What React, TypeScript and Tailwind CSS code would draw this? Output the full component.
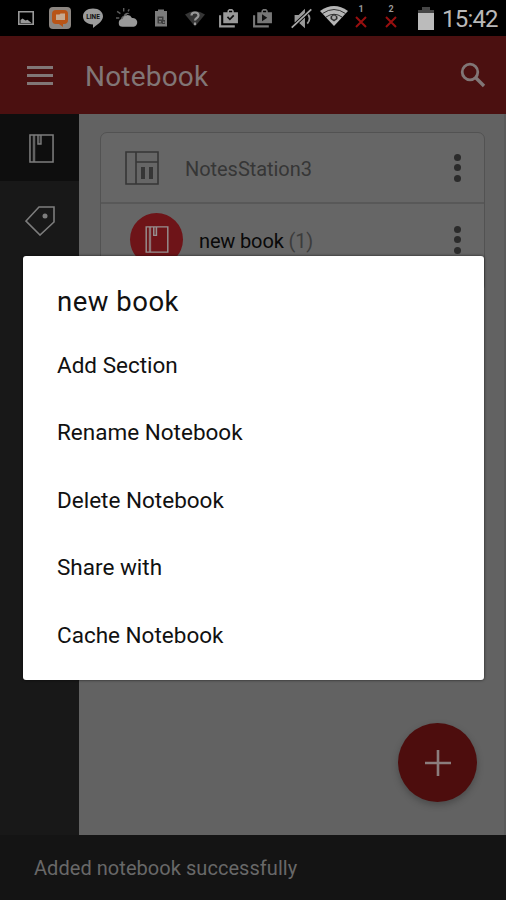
import type { ReactNode } from "react";

const actions = ["Add Section", "Rename Notebook", "Delete Notebook", "Share with", "Cache Notebook"];

function BookIcon({ className }: { className: string }) {
    return (
        <svg viewBox="0 0 26 30" className={className} fill="none" stroke="currentColor" strokeWidth="1.6">
            <path d="M1 1h24v28H1z" />
            <path d="M5.200 1v28" strokeWidth="2.600" opacity=".75" />
            <path d="M9.300 1v9.300h3.200V1" fill="currentColor" fillOpacity=".35" strokeWidth="1.400" />
        </svg>
    );
}

function MoreButton() {
    return (
        <button className="flex w-8 flex-col items-center gap-[3.5px]">
            <span className="size-[7px] rounded-full bg-[#2b2b2b]" />
            <span className="size-[7px] rounded-full bg-[#2b2b2b]" />
            <span className="size-[7px] rounded-full bg-[#2b2b2b]" />
        </button>
    );
}

function StatusIcon({ className, children }: { className: string; children: ReactNode }) {
    return (
        <svg viewBox="0 0 20 20" className={`shrink-0 ${className}`} fill="currentColor">
            {children}
        </svg>
    );
}

function SimSlot({ slot }: { slot: number }) {
    return (
        <div className="flex w-4 flex-col items-center">
            <span className="h-2 text-[9px] leading-2 font-bold">{slot}</span>
            <svg viewBox="0 0 12 12" className="mt-[3px] size-3" stroke="#980f0f" strokeWidth="2">
                <path d="M1 1l10 10M11 1L1 11" />
            </svg>
        </div>
    );
}

function StatusBar() {
    return (
        <div className="flex h-9 items-center bg-black text-[#999]">
            {/* Notifications */}
            <StatusIcon className="ml-4 size-5">
                <path fillRule="evenodd" d="M2 3h16v14H2z M3.600 4.600v10.800h12.800V4.600z" />
                <path d="M4.500 15v-3l2-1.500 3 2 2-.8 4 3.300z" />
            </StatusIcon>
            <svg viewBox="0 0 22 22" className="ml-[13px] size-[22px] shrink-0">
                <rect width="22" height="22" rx="4" fill="#8c8681" />
                <path d="M7 3h8q4 0 4 4v6q0 4-4 4h-1v3l-4-3H7q-4 0-4-4V7q0-4 4-4z" fill="#b85416" />
                <path d="M7 7.500h3.500l1-1H16V13H7z" fill="#c6aa91" />
            </svg>
            <svg viewBox="0 0 22 22" className="ml-[11px] size-[22px] shrink-0">
                <path d="M11 1.500c6 0 10 3.500 10 8 0 5-7 9-10 11.500v-3.500C5 17 1 14 1 9.500c0-4.500 4-8 10-8z" fill="#9b9b9b" />
                <text x="11" y="11.800" textAnchor="middle" fontSize="6.500" fontWeight="700" fill="#111">LINE</text>
            </svg>
            <StatusIcon className="ml-3 size-[22px]">
                <path d="M7 8a3.500 3.500 0 0 1 5.500-2C9.500 6 8 9 8 10.500c-2 .2-3 1-3.500 2A4 4 0 0 1 7 8z" opacity=".65" />
                <path d="M7 1v3M1 4l3 2M0 10h3M12 2l-1 2" stroke="currentColor" strokeWidth="1.300" opacity=".6" />
                <path d="M6 18a3.500 3.500 0 0 1 0-7 4.500 4.500 0 0 1 8.500-1A4 4 0 0 1 16 18z" />
            </StatusIcon>
            <StatusIcon className="ml-[13px] size-5 text-[#7c7c7c]">
                <path d="M4 3h3V1.500h6V3h3v15.500H4z" />
                <path d="M6.500 8.500h6v7h-6zM11 12h3v4h-3z" fill="#3d3d3d" />
                <path d="M8 10h3v1.500H8zM8 13h2v1.500H8zM12 13.500h1.500v1.500H12z" />
            </StatusIcon>
            <StatusIcon className="ml-3.5 size-5">
                <path d="M0 6.500q10-7 20 0L10 18.500z" opacity=".35" />
                <path d="M6.500 7.500c0-4 7-4 7 0 0 2.500-3.500 2.500-3.500 5M10 14.500v2.500" fill="none" stroke="currentColor" strokeWidth="2.200" />
            </StatusIcon>
            <StatusIcon className="ml-[13px] size-[21px]">
                <path fillRule="evenodd" d="M5 4h4V2.500L10.500 1h3L15 2.500V4h4v10.500H5z M10.500 2.600V4h3V2.600z" />
                <path d="M2 7v10.500h14" fill="none" stroke="currentColor" strokeWidth="2" />
                <path d="M9 8.500l2.300 2.300L15 7" fill="none" stroke="#111" strokeWidth="1.600" />
            </StatusIcon>
            <StatusIcon className="ml-[13px] size-[21px] text-[#777]">
                <path fillRule="evenodd" d="M5 4h4V2.500L10.500 1h3L15 2.500V4h4v10.500H5z M10.500 2.600V4h3V2.600z" />
                <path d="M2 7v10.500h14" fill="none" stroke="currentColor" strokeWidth="2" />
                <path d="M9.500 6v6.500l5-3.250z" fill="#111" />
            </StatusIcon>

            {/* System indicators */}
            <StatusIcon className="ml-[17px] size-[23px]">
                <path d="M4 7h3.500L13 1.500v17l-5.500-5H4z" />
                <path d="M15 5.500q4 4.500 0 9" fill="none" stroke="currentColor" strokeWidth="1.500" />
                <path d="M1.500 18L18.500 2" stroke="#000" strokeWidth="3" />
                <path d="M1.500 18L18.500 2" stroke="#aaa" strokeWidth="1.500" />
            </StatusIcon>
            <svg viewBox="0 0 28 22" className="mb-1 ml-[7px] h-[22px] w-7 shrink-0">
                <path d="M0 6Q14-4 28 6L14 21z" fill="#b5b5b5" />
                <path d="M2.500 8.500Q14 .5 25.500 8.500M6 12Q14 6.500 22 12" fill="none" stroke="#303030" strokeWidth="1" />
                <path d="M10.500 11.500l3.500-2.500 3.500 2.500v2.500L14 16.500 10.500 14z" fill="#303030" />
                <circle cx="14" cy="12.500" r="2" fill="#aaa" />
            </svg>
            <div className="ml-[5px] flex gap-3.5 pb-[3px]">
                <SimSlot slot={1} />
                <SimSlot slot={2} />
            </div>
            <svg viewBox="0 0 16 23" className="ml-[19px] h-[23px] w-4 shrink-0">
                <path d="M0 3h4V0h8v3h4v3H0z" fill="#464646" />
                <path d="M0 6h16v17H0z" fill="#bbb" />
            </svg>
            <span className="ml-2 pt-0.5 text-[24px] leading-[34px] tracking-[-0.8px] text-[#b9b9b9]">15:42</span>
        </div>
    );
}

export default function App() {
    return (
        <div className="relative flex h-[900px] w-[506px] flex-col overflow-hidden bg-[#141414] font-['Roboto',sans-serif]">
            <StatusBar />

            <header className="flex h-[78px] items-center bg-[#4b1010] pr-5 pl-[27px] text-[#817676]">
                <button className="flex w-[26px] flex-col gap-[5px]">
                    <span className="h-[3px] bg-current" />
                    <span className="h-[3px] bg-current" />
                    <span className="h-[3px] bg-current" />
                </button>
                <h1 className="ml-8 pt-[3px] text-[28px] leading-none tracking-[0.2px]">Notebook</h1>
                <svg viewBox="0 0 26 26" className="ml-auto size-[26px]" fill="none" stroke="currentColor">
                    <circle cx="10" cy="10" r="7.800" strokeWidth="2.800" />
                    <path d="M15.500 15.500l8.500 8.500" strokeWidth="3.300" />
                </svg>
            </header>

            <div className="flex h-[721px]">
                <nav className="flex w-[79px] flex-col bg-[#181818] text-[#7d7d7d]">
                    <button className="flex h-[67px] items-center justify-center bg-[#0e0e0e] pt-0.5 pl-[3px]">
                        <BookIcon className="h-[29px] w-[25px]" />
                    </button>
                    <button className="flex h-[78px] items-center justify-center pt-0.5 pl-px">
                        <svg viewBox="0 0 30 30" className="size-[30px]" fill="none" stroke="currentColor" strokeWidth="1.600">
                            <path d="M14 1h15v15L15 29 1 15z" />
                            <circle cx="20" cy="10" r="2.500" fill="currentColor" stroke="none" />
                        </svg>
                    </button>
                </nav>

                <main className="flex flex-1 flex-col border-r-2 border-[#5a5a5a] bg-[#626262] pt-[18px] pr-[19px] pl-[21px]">
                    <section className="h-[160px] rounded-[7px] border border-[#525252] bg-[#666]">
                        <div className="flex h-[71px] items-center border-b-2 border-[#585858] pr-[11px] pl-6">
                            <svg viewBox="0 0 34 34" className="size-[34px] text-[#363636]" fill="none" stroke="currentColor" strokeWidth="1.600">
                                <path d="M1 1h32v32H1z M11 1v32 M11 11h22" />
                                <path d="M18 16v12M26 16v12" strokeWidth="4" />
                            </svg>
                            <span className="ml-[26px] pt-[3px] text-[20px] tracking-[-0.05px] text-[#363636]">NotesStation3</span>
                            <div className="ml-auto"><MoreButton /></div>
                        </div>
                        <div className="flex h-[71px] items-center pr-[11px] pl-[29px]">
                            <div className="flex size-[53px] items-center justify-center rounded-full bg-[#6e1418] text-[#969090]">
                                <BookIcon className="h-[27px] w-6" />
                            </div>
                            <span className="ml-4 pt-[3px] text-[20px] tracking-[-0.15px] text-[#090909]">
                                new book <span className="text-[#3c3c3c]">(1)</span>
                            </span>
                            <div className="ml-auto"><MoreButton /></div>
                        </div>
                    </section>
                    <button className="mt-auto mr-2 mb-[33px] flex size-[79px] items-center justify-center self-end rounded-full bg-[#4d0d0d] text-[#8b7d7d] shadow-[0_3px_7px_rgba(0,0,0,0.25)]">
                        <svg viewBox="0 0 26 26" className="size-[26px]" stroke="currentColor" strokeWidth="2.600">
                            <path d="M13 0v26M0 13h26" />
                        </svg>
                    </button>
                </main>
            </div>

            <footer className="flex h-[65px] items-center pt-px pl-[34px] text-[20px] tracking-[0.05px] text-[#686868]">
                Added notebook successfully
            </footer>

            {/* Notebook menu */}
            <div className="absolute top-[256px] left-[23px] h-[424px] w-[461px] rounded-[3px] bg-white px-[34px] text-[#111] shadow-[0_0_3px_rgba(0,0,0,0.7)]">
                <h2 className="flex h-[75px] items-center pt-[17px] text-[27.5px] tracking-[0.5px]">new book</h2>
                <ul>
                    {actions.map((action) => (
                        <li key={action} className="flex h-[67.5px] items-center pt-0.5 text-[22.5px]">
                            {action}
                        </li>
                    ))}
                </ul>
            </div>
        </div>
    );
}
